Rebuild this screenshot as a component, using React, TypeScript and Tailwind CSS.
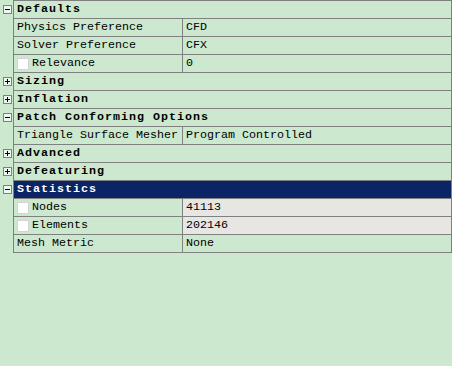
import React from "react";

type Row =
  | { kind: "header"; label: string; expanded: boolean; selected?: boolean }
  | { kind: "prop"; label: string; value: string; check?: boolean; gray?: boolean };

const rows: Row[] = [
  { kind: "header", label: "Defaults", expanded: true },
  { kind: "prop", label: "Physics Preference", value: "CFD" },
  { kind: "prop", label: "Solver Preference", value: "CFX" },
  { kind: "prop", label: "Relevance", value: "0", check: true },
  { kind: "header", label: "Sizing", expanded: false },
  { kind: "header", label: "Inflation", expanded: false },
  { kind: "header", label: "Patch Conforming Options", expanded: true },
  { kind: "prop", label: "Triangle Surface Mesher", value: "Program Controlled" },
  { kind: "header", label: "Advanced", expanded: false },
  { kind: "header", label: "Defeaturing", expanded: false },
  { kind: "header", label: "Statistics", expanded: true, selected: true },
  { kind: "prop", label: "Nodes", value: "41113", check: true, gray: true },
  { kind: "prop", label: "Elements", value: "202146", check: true, gray: true },
  { kind: "prop", label: "Mesh Metric", value: "None" },
];

function Toggle({ expanded }: { expanded: boolean }) {
  return (
    <svg width="9" height="9" viewBox="0 0 9 9" className="block">
      <rect x="0.5" y="0.5" width="8" height="8" fill="#eef7ef" stroke="#808080" />
      <line x1="2" y1="4.5" x2="7" y2="4.5" stroke="#000" strokeWidth="1" />
      {!expanded && <line x1="4.5" y1="2" x2="4.5" y2="7" stroke="#000" strokeWidth="1" />}
    </svg>
  );
}

export default function App() {
  return (
    <div
      className="w-[452px] h-[366px] bg-[#cce8cf] text-black"
      style={{ fontFamily: '"Liberation Mono", "DejaVu Sans Mono", monospace' }}
    >
      <div className="flex flex-col">
        {rows.map((r, i) => (
          <div key={i} className="flex">
            <div
              className={`w-[13px] flex justify-start pl-[3px] items-start ${i === 0 ? "h-[19px] pt-[5px]" : "h-[18px] pt-[4px]"}`}
            >
              {r.kind === "header" && <Toggle expanded={r.expanded} />}
            </div>
            <div
              className={`flex-1 flex border-l border-r border-b border-[#808080] ${i === 0 ? "border-t h-[19px]" : "h-[18px]"}`}
            >
              {r.kind === "header" ? (
                <div
                  className={`flex-1 flex items-center pl-[3px] font-bold text-[11.67px] tracking-[1px] leading-[17px] ${
                    r.selected ? "bg-[#0b2465] text-white" : ""
                  }`}
                >
                  {r.label}
                </div>
              ) : (
                <>
                  <div className="w-[168px] flex items-center pl-[3px] text-[11.67px] leading-[17px] whitespace-nowrap">
                    {r.check && (
                      <span className="w-[12px] h-[12px] bg-white border border-[#d4d4d4] mr-[3px] shrink-0" />
                    )}
                    {r.label}
                  </div>
                  <div
                    className={`flex-1 flex items-center pl-[3px] border-l border-[#808080] text-[11.67px] leading-[17px] whitespace-nowrap ${
                      r.gray ? "bg-[#e8e6e3]" : ""
                    }`}
                  >
                    {r.value}
                  </div>
                </>
              )}
            </div>
          </div>
        ))}
      </div>
    </div>
  );
}
